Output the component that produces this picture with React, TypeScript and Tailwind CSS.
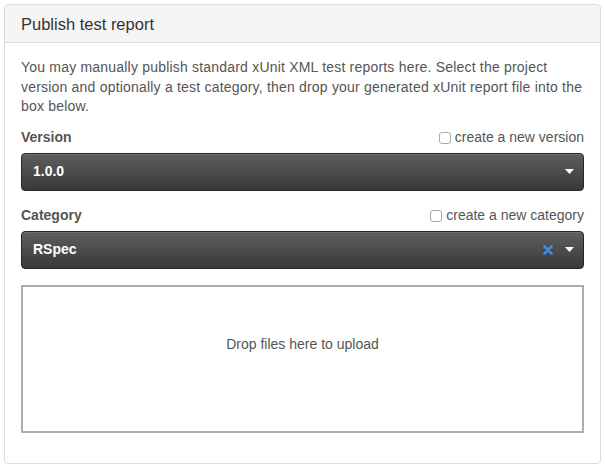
const font = { fontFamily: '"Liberation Sans", Arial, sans-serif' }

function Caret() {
  return (
    <svg width="9" height="5" viewBox="0 0 9 5" className="ml-3">
      <path d="M0 0h9L4.5 5z" fill="#fff" />
    </svg>
  )
}

function ClearIcon() {
  return (
    <svg width="10" height="10" viewBox="0 0 10 10">
      <path d="M1.5 1.5l7 7M8.5 1.5l-7 7" stroke="#3b8fe6" strokeWidth={2.6} strokeLinecap="round" />
    </svg>
  )
}

function FieldHeader({ label, check }: { label: string; check: string }) {
  return (
    <div className="flex h-5 items-center justify-between">
      <span className="text-[14px] font-bold text-[#555]">{label}</span>
      <label className="flex items-center gap-[4px] text-[14px] text-[#555]">
        <span className="inline-block h-[12px] w-[12px] rounded-[3px] border border-[#a9a9a9] bg-white" />
        {check}
      </label>
    </div>
  )
}

function DarkSelect({ value, clearable }: { value: string; clearable?: boolean }) {
  return (
    <div className="mt-[5px] flex h-[38px] items-center rounded-[4px] border border-[#262626] bg-gradient-to-b from-[#5f5f5f] to-[#393939] pr-[9px] pl-[11px] shadow-[inset_0_1px_0_rgba(255,255,255,0.12)]">
      <span className="flex-1 text-[14px] font-bold text-white">{value}</span>
      {clearable && <ClearIcon />}
      <Caret />
    </div>
  )
}

export default function App() {
  return (
    <div className="min-h-[469px] bg-white p-[4px]" style={font}>
      <div className="h-[460px] rounded-[4px] border border-[#dcdcdc] bg-white">
        <div className="flex h-[38px] items-center rounded-t-[4px] border-b border-[#dcdcdc] bg-[#f5f5f5] px-4">
          <h3 className="pt-px text-[16.5px] text-[#333]">Publish test report</h3>
        </div>
        <div className="px-4 pt-[15px]">
          <p className="text-[14px] leading-[19.5px] tracking-[0.2px] text-[#555]">
            You may manually publish standard xUnit XML test reports here. Select the project
            version and optionally a test category, then drop your generated xUnit report file into
            the box below.
          </p>
          <div className="mt-[11px]">
            <FieldHeader label="Version" check="create a new version" />
            <DarkSelect value="1.0.0" />
          </div>
          <div className="mt-[15px]">
            <FieldHeader label="Category" check="create a new category" />
            <DarkSelect value="RSpec" clearable />
          </div>
          <div className="mt-[16px] flex h-[148px] justify-center border-2 border-[#adadad] pt-[47px]">
            <span className="h-5 text-[14px] leading-5 text-[#555]">Drop files here to upload</span>
          </div>
        </div>
      </div>
    </div>
  )
}
